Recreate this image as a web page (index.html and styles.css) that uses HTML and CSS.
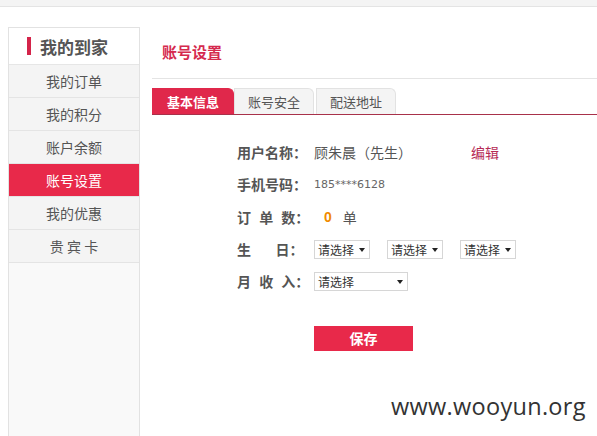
FILE: index.html
```html
<!DOCTYPE html>
<html lang="zh">
<head>
<meta charset="utf-8">
<title>账号设置</title>
<link rel="stylesheet" href="styles.css">
</head>
<body>
<div class="topbar"></div>
<div class="page">
  <aside class="side">
    <div class="side-head"><span class="mark"></span>我的到家</div>
    <ul class="side-list">
      <li>我的订单</li>
      <li>我的积分</li>
      <li>账户余额</li>
      <li class="on">账号设置</li>
      <li>我的优惠</li>
      <li>贵 宾 卡</li>
    </ul>
  </aside>
  <main class="main">
    <h2 class="title">账号设置</h2>
    <div class="tabs">
      <span class="tab active">基本信息</span>
      <span class="tab">账号安全</span>
      <span class="tab">配送地址</span>
    </div>
    <div class="form">
      <div class="row">
        <span class="lbl">用户名称：</span><span class="val">顾朱晨（先生）</span><a class="edit">编辑</a>
      </div>
      <div class="row">
        <span class="lbl">手机号码：</span><span class="phone">185****6128</span>
      </div>
      <div class="row">
        <span class="lbl sp">订 单 数：</span><span class="num">0</span><span class="val">单</span>
      </div>
      <div class="row">
        <span class="lbl sp">生   日：</span>
        <span class="sel s1">请选择<i></i></span>
        <span class="sel s1">请选择<i></i></span>
        <span class="sel s1">请选择<i></i></span>
      </div>
      <div class="row">
        <span class="lbl sp">月 收 入：</span>
        <span class="sel s2">请选择<i></i></span>
      </div>
      <div class="btnrow"><button class="save">保存</button></div>
    </div>
  </main>
</div>
<div class="wm">www.wooyun.org</div>
</body>
</html>
```
FILE: styles.css
```css
* { box-sizing: border-box; }
html, body { margin: 0; padding: 0; height: 100%; overflow: hidden; }
body {
  font-family: "Noto Sans CJK SC", "Liberation Sans", sans-serif;
  background: #fff;
  color: #555;
  position: relative;
}
.topbar {
  height: 7px;
  background: #f4f4f4;
  border-bottom: 1px solid #e4e4e4;
}
.page {
  display: flex;
  padding-left: 8px;
  height: 429px;
}
.side {
  width: 132px;
  margin-top: 20px;
  border: 1px solid #e2e2e2;
  border-bottom: none;
  background: #f9f9f9;
  flex-shrink: 0;
}
.side-head {
  height: 37px;
  background: #fff;
  display: flex;
  align-items: center;
  font-size: 17px;
  font-weight: bold;
  color: #555;
  padding-left: 18px;
  border-bottom: 1px solid #e6e6e6;
}
.mark {
  width: 4px;
  height: 18px;
  background: #d4244a;
  margin-right: 9px;
}
.side-list { list-style: none; margin: 0; padding: 0; }
.side-list li {
  height: 33px;
  line-height: 32px;
  border-bottom: 1px solid #e4e4e4;
  background: #f4f4f4;
  text-align: center;
  font-size: 14px;
  color: #555;
}
.side-list li.on { background: #e8294a; color: #fff; }
.main { flex: 1; margin-left: 12px; }
.title {
  margin: 0;
  padding: 36px 0 0 10px;
  height: 72px;
  font-size: 15px;
  font-weight: bold;
  color: #d52a4e;
  line-height: 18px;
  border-bottom: 1px solid #e4e4e4;
}
.tabs {
  margin-top: 9px;
  display: flex;
  height: 27px;
  border-bottom: 1px solid #a8314a;
}
.tab {
  width: 80px;
  height: 26px;
  line-height: 26px;
  text-align: center;
  font-size: 13px;
  color: #555;
  background: #f4f4f4;
  border: 1px solid #e2e2e2;
  border-bottom: none;
  border-top-right-radius: 6px;
  margin-right: 2px;
}
.tab.active {
  width: 82px;
  background: #e0284b;
  color: #fff;
  font-weight: bold;
  border-color: #e0284b;
  margin-right: 0;
}
.form { padding-left: 85px; padding-top: 21px; }
.row {
  display: flex;
  align-items: center;
  height: 32.3px;
  font-size: 14px;
}
.lbl {
  width: 77px;
  font-weight: bold;
  color: #555;
  white-space: pre;
}
.lbl.sp { word-spacing: 5px; }
.val { color: #555; }
.edit { color: #b62a55; margin-left: 59px; }
.phone { font-family: "DejaVu Sans", sans-serif; font-size: 11px; color: #666; }
.num {
  font-family: "Liberation Sans", sans-serif;
  font-weight: bold;
  color: #f08a00;
  margin-left: 10px;
  margin-right: 11px;
}
.sel {
  position: relative;
  height: 19px;
  border: 1px solid #d6d6d6;
  font-size: 12px;
  color: #333;
  line-height: 17px;
  padding-left: 3px;
  margin-right: 17px;
}
.sel i {
  position: absolute;
  right: 4px;
  top: 7px;
  border-left: 3px solid transparent;
  border-right: 3px solid transparent;
  border-top: 4px solid #222;
}
.s1 { width: 56px; }
.s2 { width: 94px; }
.btnrow { padding-top: 28px; padding-left: 77px; }
.save {
  width: 99px;
  height: 25px;
  border: none;
  background: #e8294a;
  color: #fff;
  font-family: "Noto Sans CJK SC", sans-serif;
  font-size: 14px;
  font-weight: bold;
  padding: 0;
}
.wm {
  position: absolute;
  left: 391px;
  top: 390px;
  font-family: "Open Sans", "DejaVu Sans", sans-serif;
  font-size: 23.5px;
  color: #333;
  letter-spacing: 0.3px;
}
```
